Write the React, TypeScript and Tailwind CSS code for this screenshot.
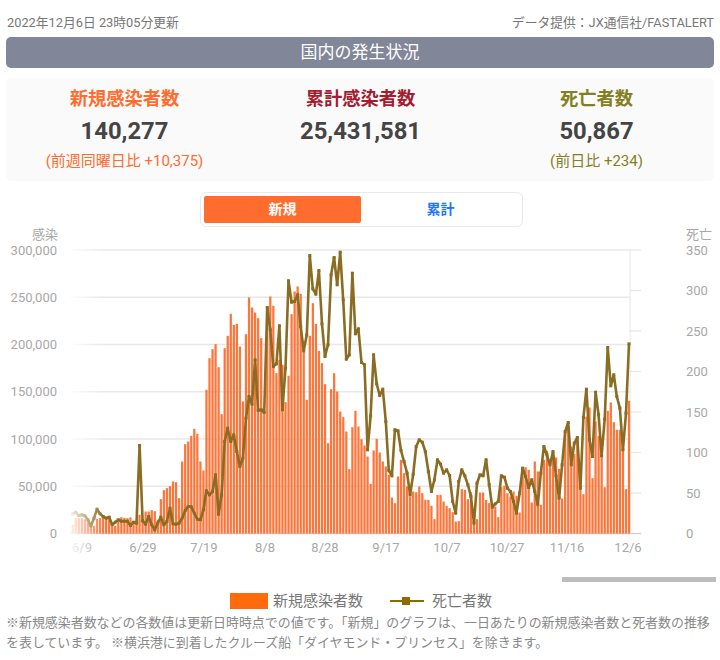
const ORANGE = "#ff6d2e";
const LINE = "#8a6c22";

// chart values are read in thirds of a pixel above the baseline
const cases = [
  26, 46, 46, 46, 43, 36, 26, 23, 44, 46, 48, 43, 43, 21, 23, 41, 49, 47, 46, 48, 36, 38, 56, 39, 66, 66, 70, 67, 41, 103, 130, 136, 142, 156, 154, 106, 216, 268, 276, 293, 314, 299, 216, 189,
  431, 526, 553, 568, 499, 358, 556, 593, 659, 626, 629, 561,
  396, 598, 708, 678, 663, 646, 586, 366, 676, 711, 683, 481, 521, 506, 394, 473, 658, 726, 741, 719, 576, 401, 593, 691, 629, 548, 511, 448, 271, 433, 481, 426, 366, 349, 306, 193, 319, 368, 321, 283, 264, 231, 149, 249, 284, 243, 216, 201, 176, 108, 91, 171, 221, 181, 141, 111, 126, 124, 141, 121, 101, 101, 83, 43, 116, 116, 96, 83, 76, 64, 36, 37, 133, 131, 103, 124, 43, 43,
  123, 123, 101, 91, 79, 81, 49, 139, 143, 121, 111, 126, 113, 63, 194, 199, 191, 93, 216, 186, 86, 221, 248, 203, 231, 228, 194, 105, 301, 321, 261, 239, 286, 166, 118, 351, 378, 166, 336, 293, 236, 139, 368, 393, 334, 311, 311, 251, 133, 398,
];

const deaths = [
  59, 64, 54, 56, 53, 41, 23, 46, 73, 59, 51, 46, 49, 26, 34, 41, 37, 37, 37, 24, 34, 31, 264, 38, 28, 51, 26, 11, 31, 49, 26, 36, 76, 29, 28, 31, 46, 69, 81, 80, 61, 43, 41,
  71, 128, 116, 126, 176, 58, 116, 276, 316, 276, 296, 246, 201, 226, 346, 411, 388, 521, 369, 371, 363, 678, 611, 501, 509, 623, 371, 496, 758, 694, 696, 716, 621, 548, 596, 834, 734, 718, 789, 629, 531, 566, 776, 828, 746, 844, 701, 523, 536,
  781, 599, 614, 513, 506, 251, 353, 536, 449, 414, 433, 336, 189, 173, 311, 308, 249, 216, 181, 116, 178, 261, 281, 274, 246, 186, 126, 161, 221, 208, 181, 191, 174, 96, 61, 156, 191, 173, 146, 111, 31, 151, 176,
  173, 221, 146, 79, 89, 96, 173, 169, 136, 126, 96, 61, 121, 196, 171, 138, 161, 126, 86, 181, 261, 236, 206, 246, 173, 106, 206, 306, 333, 206, 271, 288, 136, 348, 433, 281, 231, 424, 356, 233, 343, 558, 443, 476, 411, 376, 251, 361, 569,
];

const BASE = 305.5;
const PLOT_H = 283.5;
const xOf = (i: number) => 629 - (183 - i) * 3.04;
const yOf = (h: number) => BASE - h / 3;

const leftTicks = ["0", "50,000", "100,000", "150,000", "200,000", "250,000", "300,000"];
const rightTicks = ["0", "50", "100", "150", "200", "250", "300", "350"];
const dates: [string, number][] = [
  ["6/9", 82],
  ["6/29", 143],
  ["7/19", 204],
  ["8/8", 265],
  ["8/28", 325],
  ["9/17", 386],
  ["10/7", 447],
  ["10/27", 507],
  ["11/16", 567],
  ["12/6", 628],
];

function Chart() {
  const points = deaths.map((h, i) => `${xOf(i).toFixed(1)},${yOf(h).toFixed(1)}`).join(" ");
  return (
    <svg width="720" height="345" viewBox="0 0 720 345" className="block" fontSize="13" fill="#a8a8a8">
      <defs>
        <linearGradient id="fade" x1="0" x2="1" y1="0" y2="0">
          <stop offset="0" stopColor="#fff" stopOpacity="0.95" />
          <stop offset="1" stopColor="#fff" stopOpacity="0" />
        </linearGradient>
      </defs>
      <text x="32" y="11">感染</text>
      <text x="686" y="11">死亡</text>
      {leftTicks.map((t, i) => {
        const y = BASE - (PLOT_H / 6) * i;
        return (
          <g key={t}>
            <line x1="70" x2="630" y1={y} y2={y} stroke={i === 0 ? "#cfcfcf" : "#e8e8e8"} strokeWidth="1.3" />
            <text x="57" y={y + 4.5} textAnchor="end">{t}</text>
          </g>
        );
      })}
      {rightTicks.map((t, i) => {
        const y = BASE - (PLOT_H / 7) * i;
        return (
          <g key={t}>
            <line x1="630" x2="641" y1={y} y2={y} stroke={i === 0 ? "#cfcfcf" : "#e8e8e8"} strokeWidth="1.3" />
            <text x="686" y={y + 4.5}>{t}</text>
          </g>
        );
      })}
      <line x1="630" x2="630" y1={BASE - PLOT_H} y2={BASE} stroke="#e6e6e6" strokeWidth="1" />
      {cases.map((h, i) => (
        <rect key={i} x={xOf(i) - 1.1} y={yOf(h)} width="2.25" height={h / 3} fill={ORANGE} fillOpacity="0.95" />
      ))}
      <polyline points={points} fill="none" stroke={LINE} strokeWidth="2.6" strokeLinejoin="round" />
      {deaths.map((h, i) => (
        <rect key={i} x={xOf(i) - 1.5} y={yOf(h) - 1.5} width="3" height="3" fill={LINE} />
      ))}
      {dates.map(([d, x]) => (
        <text key={d} x={x} y={323.5} textAnchor="middle">{d}</text>
      ))}
      <rect x="68" y="15" width="36" height="315" fill="url(#fade)" />
    </svg>
  );
}

function Stat({ title, value, note, color }: { title: string; value: string; note?: string; color: string }) {
  return (
    <div className="flex flex-col items-center pl-[1px]">
      <div className="text-[18.3px] font-bold leading-[24px]" style={{ color }}>{title}</div>
      <div className="mt-[6px] text-[23.8px] font-bold leading-[28px] text-[#444444]">{value}</div>
      <div className="mt-[6px] h-[20px] text-[15px] leading-[20px]" style={{ color }}>{note}</div>
    </div>
  );
}

export default function App() {
  return (
    <div className="h-[660px] w-[720px] overflow-hidden bg-white font-['Roboto','Noto_Sans_CJK_JP',sans-serif]">
      <div className="px-[6px]">
        <div className="flex h-[37px] items-center justify-between pt-[8px] text-[12.8px] text-[#777777]">
          <span className="pl-[1px]">2022年12月6日 23時05分更新</span>
          <span>データ提供：JX通信社/FASTALERT</span>
        </div>
        <div className="flex h-[31px] items-center justify-center rounded-[5px] bg-[#828699] text-[17px] text-white">
          国内の発生状況
        </div>
        <div className="mt-[10px] grid h-[103px] grid-cols-3 items-start rounded-[6px] bg-[#fafafa] pt-[9px]">
          <Stat title="新規感染者数" value="140,277" note="(前週同曜日比 +10,375)" color={ORANGE} />
          <Stat title="累計感染者数" value="25,431,581" color="#a51c30" />
          <Stat title="死亡者数" value="50,867" note="(前日比 +234)" color="#85801f" />
        </div>
        <div className="ml-[194px] mt-[11px] flex h-[35px] w-[323px] items-center gap-[3px] rounded-[6px] border border-[#e9e9e9] px-[3px] pb-[1px] text-[14px] font-bold">
          <div className="flex h-[27px] w-[157px] items-center justify-center rounded-[2px] bg-[#ff6d2e] text-white">新規</div>
          <div className="flex h-[27px] w-[153px] items-center justify-center text-[#2176ff]">累計</div>
        </div>
      </div>
      <div className="mt-[1px]">
        <Chart />
      </div>
      <div className="ml-[562px] mt-[4px] h-[5px] w-[154px] bg-[#bdbdbd]" />
      <div className="mt-[10px] flex h-[18px] items-center justify-center pl-[2px] text-[15px] text-[#777777]">
        <span className="h-[16px] w-[38px] bg-[#ff6a0a]" />
        <span className="ml-[5px]">新規感染者数</span>
        <span className="relative ml-[27px] h-[2px] w-[34px] bg-[#8f6a00]">
          <span className="absolute left-[12px] top-[-3px] h-[8px] w-[8px] bg-[#8f6a00]" />
        </span>
        <span className="ml-[8px]">死亡者数</span>
      </div>
      <p className="mt-[3px] px-[6px] text-[12.95px] leading-[20px] text-[#888888]">
        ※新規感染者数などの各数値は更新日時時点での値です。「新規」のグラフは、一日あたりの新規感染者数と死者数の推移を表しています。 ※横浜港に到着したクルーズ船「ダイヤモンド・プリンセス」を除きます。
      </p>
    </div>
  );
}
